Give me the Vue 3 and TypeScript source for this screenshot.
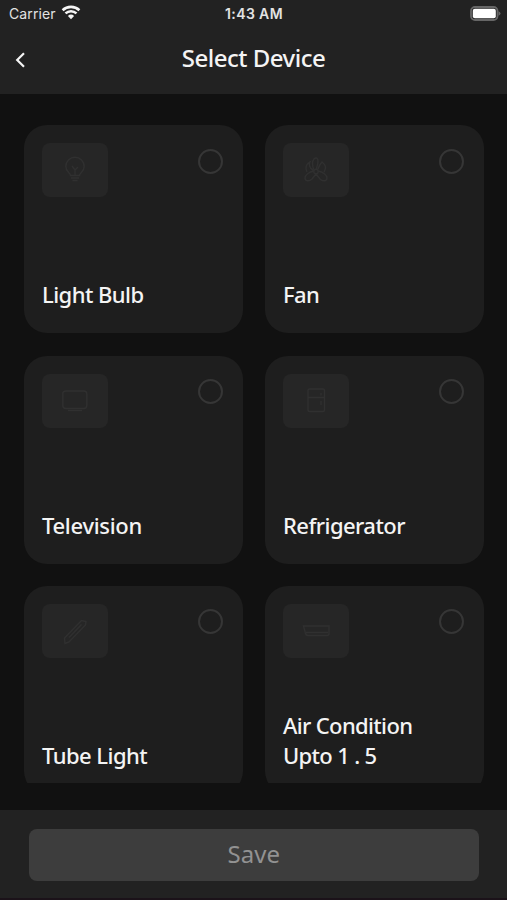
<script setup lang="ts">
import { ref } from 'vue'

type DeviceIcon = 'bulb' | 'fan' | 'tv' | 'fridge' | 'tube' | 'ac'

interface Device {
  icon: DeviceIcon
  lines: string[]
}

const devices: Device[] = [
  { icon: 'bulb', lines: ['Light Bulb'] },
  { icon: 'fan', lines: ['Fan'] },
  { icon: 'tv', lines: ['Television'] },
  { icon: 'fridge', lines: ['Refrigerator'] },
  { icon: 'tube', lines: ['Tube Light'] },
  { icon: 'ac', lines: ['Air Condition', 'Upto 1 . 5'] },
]

const selected = ref<DeviceIcon | null>(null)
</script>

<template>
  <div class="screen">
    <header class="top">
      <div class="status">
        <div class="carrier">
          <span>Carrier</span>
          <svg class="wifi" width="20" height="15" viewBox="0 0 20 15">
            <path d="M1.6 5.2a12.2 12.2 0 0 1 16.8 0" />
            <path d="M4.5 8.4a8 8 0 0 1 11 0" />
            <path class="solid" d="M6.9 11a4.600 4.600 0 0 1 6.200 0L10 14.300z" />
          </svg>
        </div>
        <span class="clock">1:43 AM</span>
        <svg class="battery" width="31" height="15" viewBox="0 0 31 15">
          <rect class="shell" x="1" y="1" width="26.500" height="13" rx="4" />
          <rect class="charge" x="2.800" y="2.800" width="23" height="9.400" rx="2" />
          <path class="cap" d="M28.500 5.200q2 .8 2 2.300t-2 2.300z" />
        </svg>
      </div>
      <div class="nav">
        <button class="back" type="button" aria-label="Back">
          <svg width="10" height="16" viewBox="0 0 10 16"><path d="M9 1.200 2.200 8 9 14.800" /></svg>
        </button>
        <h1>Select Device</h1>
      </div>
    </header>

    <main class="list">
      <div class="grid">
        <article
          v-for="device in devices"
          :key="device.icon"
          class="card"
          @click="selected = device.icon"
        >
          <div class="card-top">
            <div class="tile">
              <svg width="28" height="28" viewBox="0 0 28 28">
                <g v-if="device.icon === 'bulb'">
                  <path d="M9.500 19.500c0-2.200-4.700-4-4.700-9a9.200 9.200 0 0 1 18.400 0c0 5-4.700 6.800-4.700 9z" />
                  <path d="M10 22h8M11.500 24.500h5M11 10l3 4 3-3M14 14v5" />
                </g>
                <g v-else-if="device.icon === 'fan'">
                  <path d="M12 14c-2-4-2-9 0-11s4-1 4 2-1 6-2 9M11 14c-4-2-4-6-3-8-4 2-5 6-3 10M16 13c1-3 2-5 4-7 4 3 4 7 2 10M12 15c-5 1-9 4-9 7s4 4 7 1l4-5M16 15c5 1 9 4 9 7s-4 4-7 1l-4-5" />
                  <circle cx="14" cy="15.500" r="2.200" />
                </g>
                <g v-else-if="device.icon === 'tv'">
                  <rect x="1.800" y="4" width="24" height="17.500" rx="3" />
                  <path d="M7 23.500h14" />
                </g>
                <g v-else-if="device.icon === 'fridge'">
                  <rect x="6" y="2" width="16.500" height="22.500" rx="1.500" />
                  <path d="M6 10.500h16.500M19 6v2.500M19 14v4" />
                </g>
                <g v-else-if="device.icon === 'tube'">
                  <path d="M3.500 21 20.500 3.500 25 4.500l-.5 3.500L8 25l-4 1.500z" />
                  <path d="M8 20.500 20.500 7.500" />
                </g>
                <g v-else>
                  <path d="M1.500 9H27v7.500a2 2 0 0 1-2 2H6a2.500 2.500 0 0 1-2.500-2zM4 15.500h22" />
                </g>
              </svg>
            </div>
            <span class="radio" :class="{ on: selected === device.icon }"></span>
          </div>
          <div class="label" :class="device.icon">
            <span v-for="line in device.lines" :key="line">{{ line }}</span>
          </div>
        </article>
      </div>
    </main>

    <footer class="bottom">
      <button class="save" type="button">Save</button>
    </footer>
  </div>
</template>

<style>
body {
  background: #111;
}
</style>

<style scoped>
.screen {
  box-sizing: border-box;
  display: flex;
  flex-direction: column;
  width: 100%;
  height: 900px;
  overflow: hidden;
  background: #111;
  color: #f4f4f4;
  font-family: 'Noto Sans', sans-serif;
}
button {
  padding: 0;
  border: 0;
  background: none;
  color: inherit;
  font: inherit;
}
svg {
  display: block;
}
.top {
  flex: none;
  height: 94px;
  background: #222;
}
.status {
  display: grid;
  grid-template-columns: 1fr auto 1fr;
  align-items: center;
  height: 28px;
  padding: 0 6px 0 9px;
  font: 14px/28px Inter, sans-serif;
  color: #e3e3e3;
}
.carrier {
  display: flex;
  align-items: center;
  gap: 5px;
  letter-spacing: 0.1px;
}
.wifi {
  margin-top: -3px;
}
.wifi path {
  fill: none;
  stroke: #f5f5f5;
  stroke-width: 2.6;
}
.wifi .solid {
  fill: #f5f5f5;
  stroke: none;
}
.clock {
  font-weight: 600;
  letter-spacing: 0.4px;
  margin-right: 2px;
}
.battery {
  justify-self: end;
  margin-top: -1px;
}
.shell {
  fill: none;
  stroke: #666;
  stroke-width: 1.8;
}
.charge {
  fill: #fff;
}
.cap {
  fill: #666;
}
.nav {
  display: grid;
  grid-template-columns: 60px 1fr 60px;
  align-items: center;
  height: 62px;
}
.back {
  justify-self: start;
  margin: 2px 0 0 15px;
}
.back path {
  fill: none;
  stroke: #f5f5f5;
  stroke-width: 2.2;
}
h1 {
  margin: -2px 0 0;
  font-size: 24px;
  font-weight: 500;
  line-height: 32px;
  letter-spacing: -0.5px;
  text-align: center;
}
.list {
  flex: none;
  height: 689px;
  overflow: hidden;
}
.grid {
  display: grid;
  grid-template-columns: 219px 219px;
  grid-auto-rows: 208px;
  gap: 22.3px 22px;
  padding: 31.3px 24px 0;
}
.card {
  box-sizing: border-box;
  display: flex;
  flex-direction: column;
  justify-content: space-between;
  padding: 18px 20px 23.500px 18px;
  border-radius: 23px;
  background: #1e1e1e;
}
.card-top {
  display: flex;
  align-items: flex-start;
  justify-content: space-between;
}
.tile {
  display: grid;
  place-items: center;
  width: 65.500px;
  height: 54px;
  border-radius: 8px;
  background: #262626;
}
.tile svg {
  fill: none;
  stroke: #303030;
  stroke-width: 1.4;
}
.radio {
  box-sizing: border-box;
  width: 25px;
  height: 25px;
  margin-top: 5.300px;
  border: 2.500px solid #363636;
  border-radius: 50%;
}
.radio.on {
  background: #f4f4f4;
}
.label {
  display: flex;
  flex-direction: column;
  font-size: 22px;
  font-weight: 500;
  line-height: 29.600px;
  letter-spacing: -0.55px;
  white-space: nowrap;
}
.label.tv {
  letter-spacing: -0.3px;
}
.label.ac {
  letter-spacing: -0.65px;
}
.bottom {
  flex: 1;
  box-sizing: border-box;
  margin-top: 27px;
  padding: 19px 28.500px 0 29px;
  border-bottom: 2px solid #1b1219;
  background: #222;
}
.save {
  display: block;
  box-sizing: border-box;
  width: 100%;
  height: 52px;
  padding-bottom: 3px;
  border-radius: 8px;
  background: #3d3d3d;
  color: #929292;
  font-size: 24px;
  line-height: 32px;
  text-align: center;
}
</style>
